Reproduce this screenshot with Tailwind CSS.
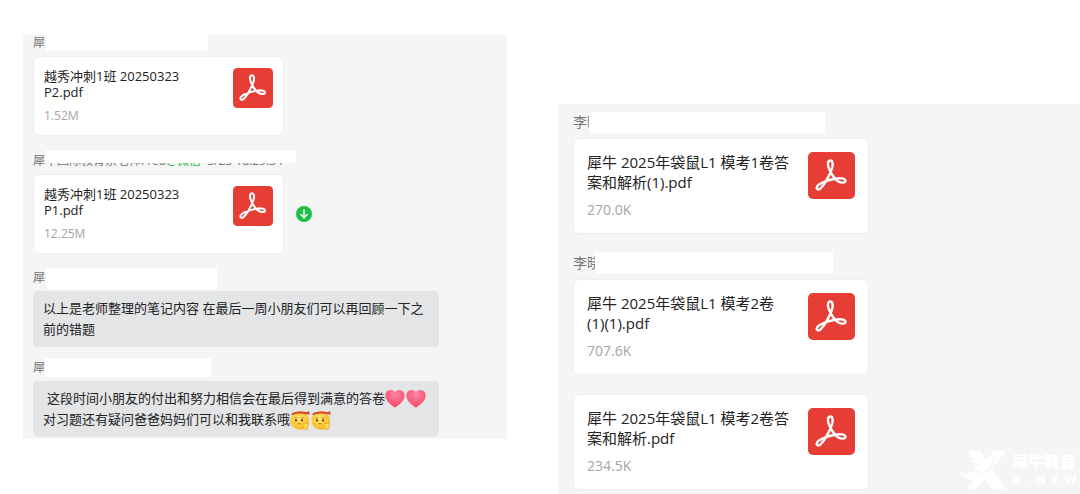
<!DOCTYPE html>
<html lang="zh-CN">
<head>
  <meta charset="UTF-8">
  <meta name="viewport" content="width=device-width, initial-scale=1.0">
  <title>群聊文件</title>
  <script src="https://cdn.jsdelivr.net/npm/@tailwindcss/browser@4"></script>
</head>
<body class="bg-white min-h-screen overflow-x-hidden font-['Open_Sans','Noto_Sans_CJK_SC',sans-serif] text-[#222]">

  <!-- shared icons -->
  <svg class="absolute size-0" aria-hidden="true">
    <defs>
      <symbol id="pdf" viewBox="0 0 47 47">
        <rect width="47" height="47" rx="5" fill="#e63e35"/>
        <path d="M23 19C20.500 25 16 33 12.500 36.500C10.500 38.500 8 37 9 34.700C10.500 31.500 19.500 28.300 26 27C31 26 37 25.800 37.500 28.500C37.700 31.500 33 31 30 29.300C26 26.500 21.500 19.500 20.300 14.500C19.300 10.500 20.500 8.500 22.400 8.500C24.800 8.500 25 12.500 24.300 15.500Q23.800 17.300 23 19Z" fill="none" stroke="#fff" stroke-width="2.400" stroke-linejoin="round"/>
      </symbol>
      <radialGradient id="pink" cx="50%" cy="25%" r="75%">
        <stop offset="0" stop-color="#ff86a8"/>
        <stop offset="1" stop-color="#f5455f"/>
      </radialGradient>
      <radialGradient id="yellow" cx="45%" cy="40%" r="60%">
        <stop offset="0" stop-color="#ffe873"/>
        <stop offset="1" stop-color="#f9b71c"/>
      </radialGradient>
      <symbol id="heart" viewBox="0 0 20 20">
        <path d="M10 3C8.500 .8 5.500 .5 3.300 1.500C.5 2.800-.2 6 .8 9C2.200 13 6.500 16.500 10 18.500C13.500 16.500 17.800 13 19.200 9C20.200 6 19.500 2.800 16.700 1.500C14.500 .5 11.500 .8 10 3Z" fill="url(#pink)"/>
      </symbol>
      <symbol id="cheer" viewBox="0 0 20 20">
        <circle cx="9.700" cy="10.500" r="9.300" fill="url(#yellow)"/>
        <path d="M1.500 3.500C6 1.300 12 1 17 2.300L19.500 .8L19 2.500L20 4.500L16.500 4.300C11.500 3 6 3.300 1.500 5.300Z" fill="#d9432a"/>
        <path d="M4 8L7.500 7.700M10.500 7.700L14 8" stroke="#b98a2a" stroke-width=".8" fill="none"/>
        <ellipse cx="6" cy="10.300" rx=".9" ry="1.200" fill="#5d3b10"/>
        <ellipse cx="12" cy="10.300" rx=".9" ry="1.200" fill="#5d3b10"/>
        <path d="M7.500 14Q9 13 10.500 14" stroke="#8a5a14" stroke-width=".8" fill="none"/>
        <path d="M12.500 13.500Q14 12.500 15 13.500L18.500 13L17.500 19Q15 20.500 13.500 19Z" fill="#ffd84a" stroke="#e39b12" stroke-width=".6"/>
      </symbol>
    </defs>
  </svg>

  <main class="grid grid-cols-[484fr_522fr] gap-x-[51px] pl-[23px] min-h-screen">

    <!-- left chat -->
    <section class="mt-[35px] self-start bg-[#f5f5f5] pl-[10px] pb-0.5 text-[13px]">
      <div class="relative h-4 mb-[5px] text-xs leading-[15px] text-[#777] whitespace-nowrap overflow-hidden">犀牛
        <span class="absolute left-[13px] top-0 w-[162px] h-4 bg-white"></span>
      </div>
      <a href="#" class="flex justify-between w-[251px] max-w-full px-[10px] py-[11px] bg-white border border-[#efefef] rounded-md">
        <div class="leading-4">
          <p>越秀冲刺1班 20250323<br>P2.pdf</p>
          <p class="mt-2 text-xs leading-4 text-[#a5a5a5]">1.52M</p>
        </div>
        <svg class="size-10 shrink-0" role="img" aria-label="PDF"><use href="#pdf"/></svg>
      </a>

      <div class="relative h-4 mt-[17px] mb-[5px] text-xs leading-4 text-[#777] whitespace-nowrap">犀牛国际教育余老师Fred<span class="text-[#22bf45]">@微信</span>&nbsp; 3/23 18:29:34
        <span class="absolute left-[13px] -top-[3px] w-[250px] h-[13px] bg-white"></span>
      </div>
      <div class="flex items-center gap-3">
        <a href="#" class="flex justify-between w-[251px] max-w-full px-[10px] py-[11px] bg-white border border-[#efefef] rounded-md">
          <div class="leading-4">
            <p>越秀冲刺1班 20250323<br>P1.pdf</p>
            <p class="mt-2 text-xs leading-4 text-[#a5a5a5]">12.25M</p>
          </div>
          <svg class="size-10 shrink-0" role="img" aria-label="PDF"><use href="#pdf"/></svg>
        </a>
        <button type="button" aria-label="下载">
          <svg class="size-4 block" viewBox="0 0 16 16">
            <circle cx="8" cy="8" r="8" fill="#1dbf45"/>
            <path d="M8 3.800V11.500M4.800 8.500L8 11.700L11.200 8.500" fill="none" stroke="#fff" stroke-width="1.500" stroke-linecap="round" stroke-linejoin="round"/>
          </svg>
        </button>
      </div>

      <div class="relative h-4 mt-4 mb-[5px] text-xs leading-4 text-[#777] whitespace-nowrap">犀牛
        <span class="absolute left-[13px] -top-0.5 w-[171px] h-[21px] bg-white"></span>
      </div>
      <div class="w-[406px] max-w-full px-[10px] py-[7px] bg-[#e3e5e7] rounded leading-[21px]">以上是老师整理的笔记内容 在最后一周小朋友们可以再回顾一下之<br>前的错题</div>

      <div class="relative h-4 mt-[13px] mb-[5px] text-xs leading-4 text-[#777] whitespace-nowrap">犀
        <span class="absolute left-[12px] -top-0.5 w-[166px] h-[19px] bg-white"></span>
      </div>
      <div class="w-[406px] max-w-full px-[10px] py-[7px] bg-[#e3e5e7] rounded leading-[21px]">
        <p class="flex items-center h-[21px] pl-1 whitespace-nowrap">这段时间小朋友的付出和努力相信会在最后得到满意的答卷<svg class="size-5 shrink-0 mr-px" role="img" aria-label="爱心"><use href="#heart"/></svg><svg class="size-5 shrink-0" role="img" aria-label="爱心"><use href="#heart"/></svg></p>
        <p class="flex items-center h-[21px] whitespace-nowrap">对习题还有疑问爸爸妈妈们可以和我联系哦<svg class="size-5 shrink-0 mr-px" role="img" aria-label="加油"><use href="#cheer"/></svg><svg class="size-5 shrink-0" role="img" aria-label="加油"><use href="#cheer"/></svg></p>
      </div>
    </section>

    <!-- right chat -->
    <section class="relative mt-[104px] bg-[#f5f5f5] pl-[15px] pt-2 text-[15px]">
      <div class="relative h-5 mb-1.5 text-sm leading-5 text-[#777] whitespace-nowrap">李晓
        <span class="absolute left-[16px] top-0 w-[236px] h-[21px] bg-white"></span>
      </div>
      <a href="#" class="flex justify-between w-[296px] max-w-full p-[13px] bg-white border border-[#efefef] rounded-md">
        <div class="leading-5">
          <p>犀牛 2025年袋鼠L1 模考1卷答<br>案和解析(1).pdf</p>
          <p class="mt-2 text-sm leading-5 text-[#a5a5a5]">270.0K</p>
        </div>
        <svg class="size-[47px] shrink-0" role="img" aria-label="PDF"><use href="#pdf"/></svg>
      </a>

      <div class="relative h-5 mt-[19px] mb-1.5 text-sm leading-5 text-[#777] whitespace-nowrap">李晓
        <span class="absolute left-[22px] -top-px w-[238px] h-[22px] bg-white"></span>
      </div>
      <a href="#" class="flex justify-between w-[296px] max-w-full p-[13px] bg-white border border-[#efefef] rounded-md">
        <div class="leading-5">
          <p>犀牛 2025年袋鼠L1 模考2卷<br>(1)(1).pdf</p>
          <p class="mt-2 text-sm leading-5 text-[#a5a5a5]">707.6K</p>
        </div>
        <svg class="size-[47px] shrink-0" role="img" aria-label="PDF"><use href="#pdf"/></svg>
      </a>

      <a href="#" class="flex justify-between w-[296px] max-w-full mt-[19px] p-[13px] bg-white border border-[#efefef] rounded-md">
        <div class="leading-5">
          <p>犀牛 2025年袋鼠L1 模考2卷答<br>案和解析.pdf</p>
          <p class="mt-2 text-sm leading-5 text-[#a5a5a5]">234.5K</p>
        </div>
        <svg class="size-[47px] shrink-0" role="img" aria-label="PDF"><use href="#pdf"/></svg>
      </a>

      <!-- watermark -->
      <div class="absolute right-1 bottom-1 flex items-center gap-1.5 text-white">
        <svg class="w-12 h-10" viewBox="10 12 142 118" fill="#fff" aria-hidden="true">
          <path d="M38 14H74L94 40L112 14H151L112 68L151 128H112L90 100L62 128H36L56 104C36 100 18 86 10 70C26 82 44 84 58 74L60 58L44 40L54 42Z"/>
          <path d="M46 46Q60 57 80 55M54 68C76 82 96 80 108 62Q116 50 118 28M80 16Q102 18 112 32" fill="none" stroke="#f5f5f5" stroke-width="5"/>
        </svg>
        <div class="w-16">
          <p class="text-base leading-5 font-black">犀牛教育</p>
          <p class="flex justify-between text-xs leading-4 font-bold"><span>X</span><span>-</span><span>N</span><span>E</span><span>W</span></p>
        </div>
      </div>
    </section>
  </main>
</body>
</html>
